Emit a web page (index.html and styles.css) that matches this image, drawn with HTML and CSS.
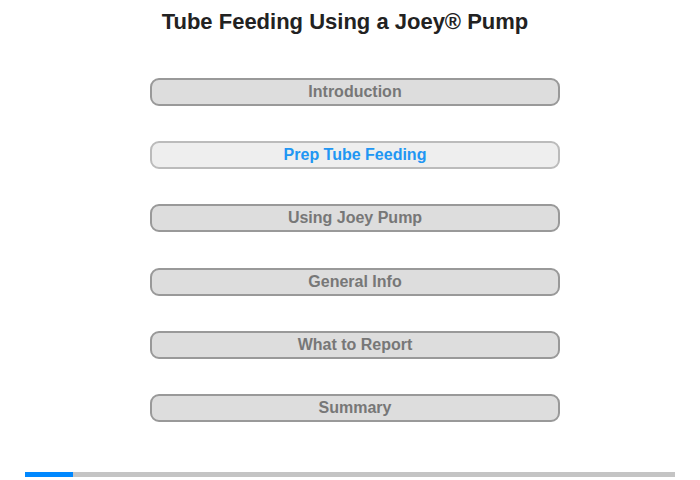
FILE: index.html
```html
<!DOCTYPE html>
<html>
<head>
<meta charset="utf-8">
<link rel="stylesheet" href="styles.css">
</head>
<body>
<div class="page">
  <h1 class="title">Tube Feeding Using a Joey® Pump</h1>
  <nav class="menu">
    <div class="btn">Introduction</div>
    <div class="btn active">Prep Tube Feeding</div>
    <div class="btn">Using Joey Pump</div>
    <div class="btn">General Info</div>
    <div class="btn">What to Report</div>
    <div class="btn">Summary</div>
  </nav>
  <div class="progress"><div class="fill"></div></div>
</div>
</body>
</html>
```
FILE: styles.css
```css
html, body {
  margin: 0;
  padding: 0;
  background: #fff;
}
.page {
  width: 700px;
  height: 480px;
  font-family: "Liberation Sans", Arial, sans-serif;
  display: flex;
  flex-direction: column;
}
.title {
  margin: 9px 0 0 0;
  padding-right: 10px;
  font-size: 22px;
  font-weight: bold;
  color: #222;
  text-align: center;
  line-height: 26px;
}
.menu {
  margin: 43px 0 0 150px;
  width: 410px;
  display: flex;
  flex-direction: column;
  gap: 35.2px;
}
.btn {
  box-sizing: border-box;
  height: 28px;
  border: 2px solid #999;
  border-radius: 9px;
  background: #dddddd;
  color: #777;
  font-weight: bold;
  font-size: 16px;
  line-height: 24px;
  text-align: center;
}
.btn.active {
  background: #eeeeee;
  border-color: #bbb;
  color: #2196f3;
}
.progress {
  margin: 50px 0 0 25px;
  width: 650px;
  height: 5px;
  background: #c4c4c4;
}
.fill {
  width: 48px;
  height: 100%;
  background: #0088ff;
}
```
